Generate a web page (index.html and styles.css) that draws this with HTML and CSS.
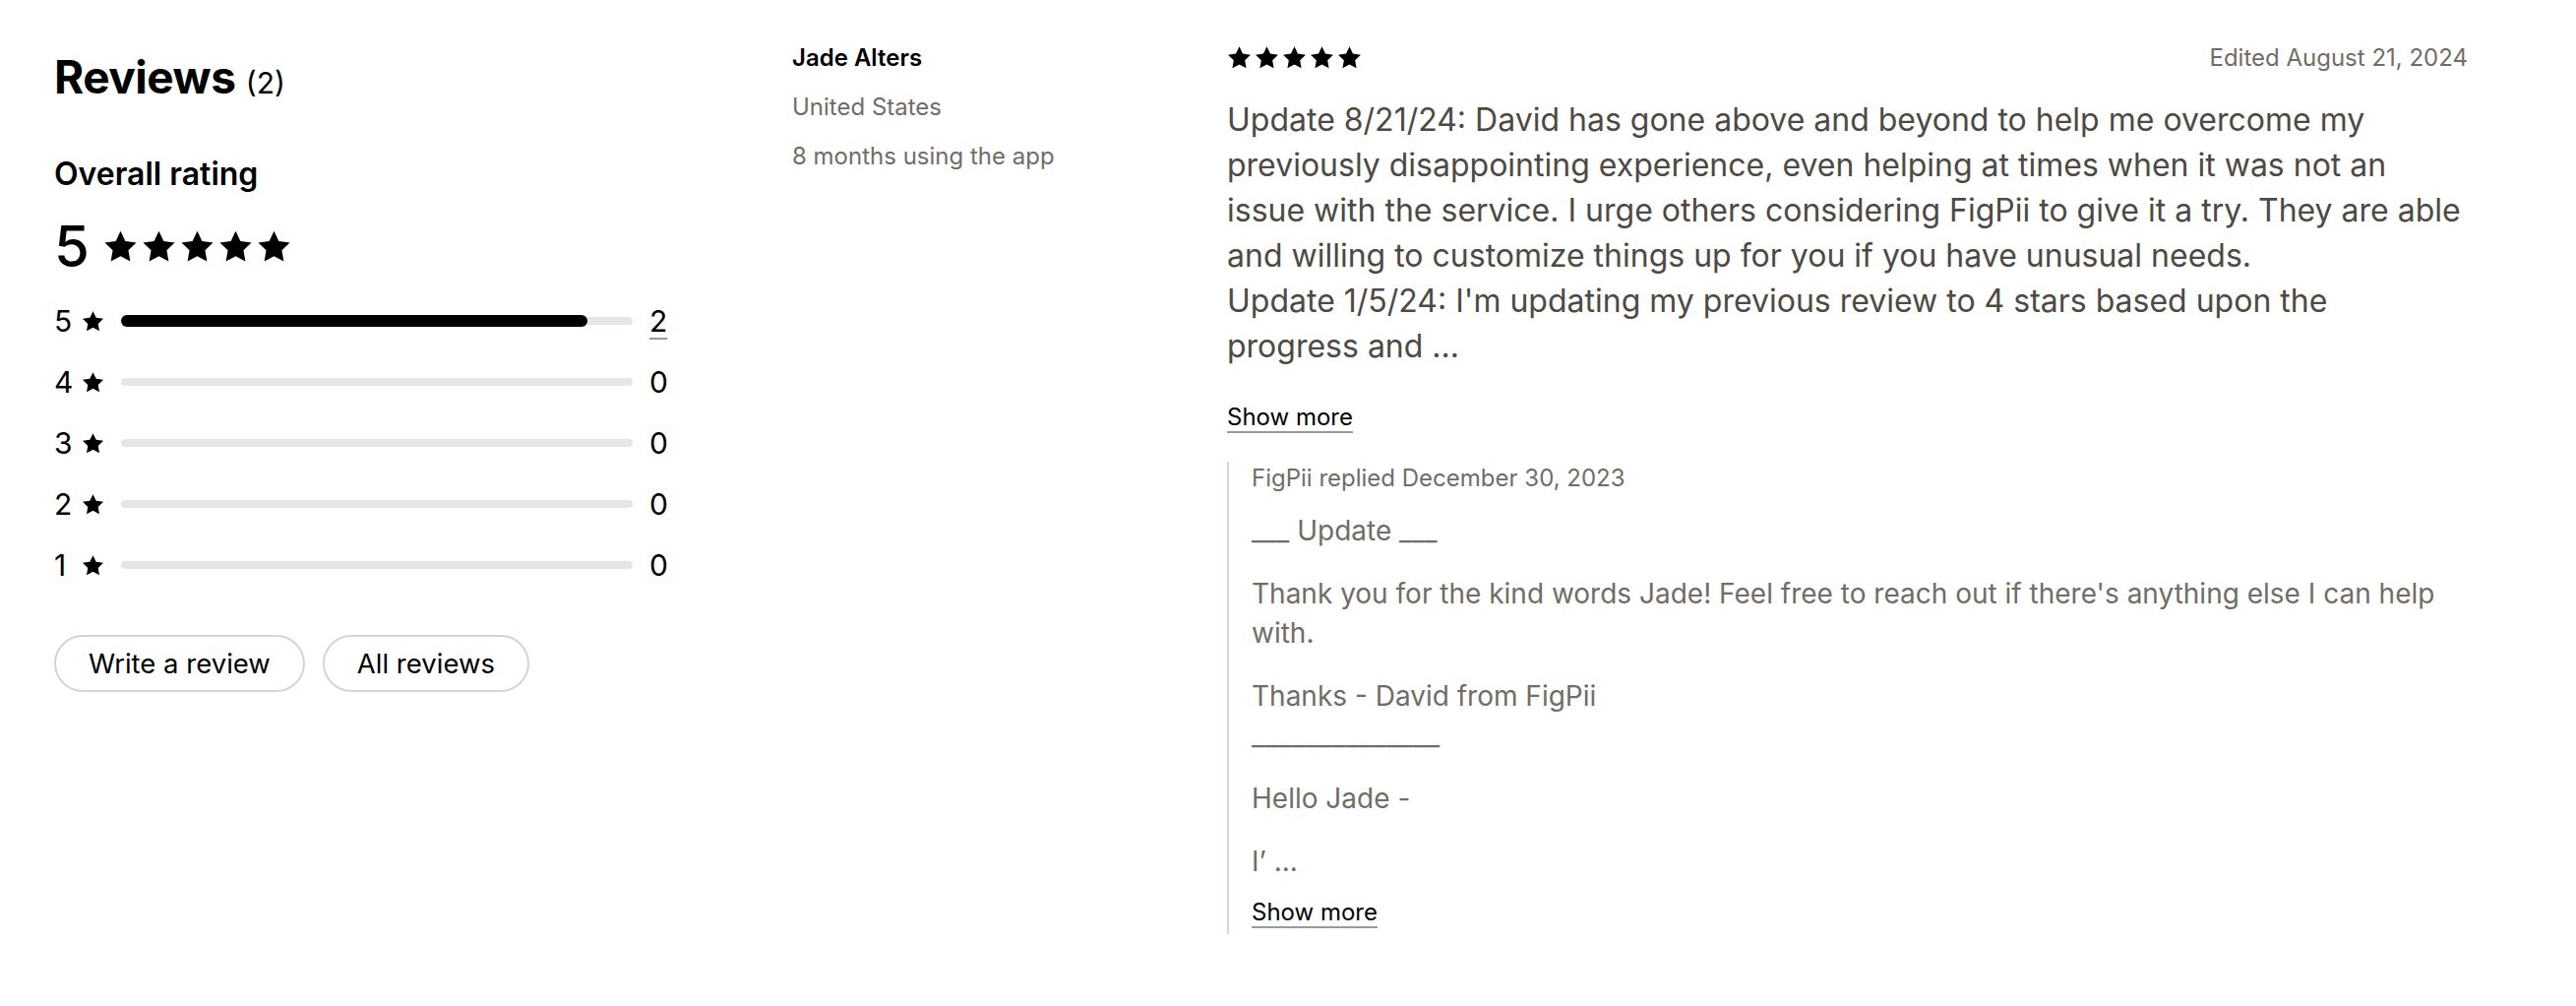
FILE: index.html
```html
<!DOCTYPE html>
<html lang="en">
<head>
<meta charset="utf-8">
<title>Reviews</title>
<link rel="stylesheet" href="styles.css">
</head>
<body>
<svg width="0" height="0" class="defs" aria-hidden="true">
  <defs>
    <symbol id="star" viewBox="0 0 24 24">
      <path d="M12 1.2l3.35 6.95 7.65 1.1-5.55 5.35 1.33 7.6L12 18.6l-6.78 3.6 1.33-7.6L1 9.25l7.65-1.1z"/>
    </symbol>
  </defs>
</svg>
<main class="page">
  <section class="summary">
    <h2 class="title">Reviews <span class="title-count">(2)</span></h2>
    <h3 class="overall">Overall rating</h3>
    <div class="score">
      <span class="score-num">5</span>
      <span class="score-stars">
        <svg class="s-lg"><use href="#star"/></svg>
        <svg class="s-lg"><use href="#star"/></svg>
        <svg class="s-lg"><use href="#star"/></svg>
        <svg class="s-lg"><use href="#star"/></svg>
        <svg class="s-lg"><use href="#star"/></svg>
      </span>
    </div>
    <ul class="dist">
      <li class="dist-row"><span class="dist-num">5</span><svg class="s-md"><use href="#star"/></svg><span class="track"><span class="fill" style="width:91.2%"></span></span><a class="dist-count link" href="#">2</a></li>
      <li class="dist-row"><span class="dist-num">4</span><svg class="s-md"><use href="#star"/></svg><span class="track"></span><span class="dist-count">0</span></li>
      <li class="dist-row"><span class="dist-num">3</span><svg class="s-md"><use href="#star"/></svg><span class="track"></span><span class="dist-count">0</span></li>
      <li class="dist-row"><span class="dist-num">2</span><svg class="s-md"><use href="#star"/></svg><span class="track"></span><span class="dist-count">0</span></li>
      <li class="dist-row"><span class="dist-num">1</span><svg class="s-md"><use href="#star"/></svg><span class="track"></span><span class="dist-count">0</span></li>
    </ul>
    <div class="actions">
      <button class="btn">Write a review</button>
      <button class="btn">All reviews</button>
    </div>
  </section>

  <section class="reviewer">
    <div class="name">Jade Alters</div>
    <div class="meta">United States</div>
    <div class="meta">8 months using the app</div>
  </section>

  <section class="review">
    <div class="review-head">
      <span class="review-stars">
        <svg class="s-sm"><use href="#star"/></svg>
        <svg class="s-sm"><use href="#star"/></svg>
        <svg class="s-sm"><use href="#star"/></svg>
        <svg class="s-sm"><use href="#star"/></svg>
        <svg class="s-sm"><use href="#star"/></svg>
      </span>
      <span class="edited">Edited August 21, 2024</span>
    </div>
    <p class="review-body">Update 8/21/24: David has gone above and beyond to help me overcome my<br>previously disappointing experience, even helping at times when it was not an<br>issue with the service. I urge others considering FigPii to give it a try. They are able<br>and willing to customize things up for you if you have unusual needs.<br>Update 1/5/24: I'm updating my previous review to 4 stars based upon the<br>progress and ...</p>
    <a class="show-more link" href="#">Show more</a>
    <div class="reply">
      <div class="reply-head">FigPii replied December 30, 2023</div>
      <p class="reply-p">___ Update ___</p>
      <p class="reply-p">Thank you for the kind words Jade! Feel free to reach out if there's anything else I can help with.</p>
      <p class="reply-p">Thanks - David from FigPii<br><span class="rule-text">______________</span></p>
      <p class="reply-p">Hello Jade -</p>
      <p class="reply-p">I’ ...</p>
      <a class="show-more reply-more link" href="#">Show more</a>
    </div>
  </section>
</main>
</body>
</html>
```

FILE: styles.css
```css
* { box-sizing: border-box; }

html, body {
  margin: 0;
  padding: 0;
  background: #ffffff;
}

body {
  font-family: Inter, "Noto Sans", "Liberation Sans", sans-serif;
  color: #000000;
}

.defs {
  position: absolute;
  width: 0;
  height: 0;
  overflow: hidden;
}

.page {
  display: grid;
  grid-template-columns: 750px 442px minmax(0, 1fr);
  padding: 33px 110px 40px 55px;
}

/* ---------- summary ---------- */
.title {
  margin: 17px 0 0;
  font-size: 46px;
  line-height: 56px;
  font-weight: 700;
  letter-spacing: -0.5px;
}

.title-count {
  font-size: 30px;
  font-weight: 400;
  letter-spacing: 0;
}

.overall {
  margin: 47px 0 0;
  font-size: 32px;
  line-height: 36px;
  font-weight: 600;
}

.score {
  display: flex;
  align-items: center;
  margin-top: 23px;
  height: 64px;
}

.score-num {
  font-size: 58px;
  line-height: 64px;
  font-weight: 500;
}

.score-stars {
  display: flex;
  gap: 4px;
  margin-left: 14px;
}

.s-lg {
  width: 35px;
  height: 35px;
  fill: #000;
}

.dist {
  list-style: none;
  margin: 13px 0 0;
  padding: 0;
  width: 622px;
}

.dist-row {
  display: flex;
  align-items: center;
  height: 62px;
  font-size: 30px;
}

.dist-num {
  width: 18px;
}

.s-md {
  width: 23px;
  height: 23px;
  margin: 0 17px 0 10px;
  fill: #000;
}

.track {
  flex: 1;
  display: flex;
  align-items: center;
  height: 8px;
  border-radius: 4px;
  background: #e6e6e6;
}

.fill {
  height: 12px;
  border-radius: 6px;
  background: #000;
}

.dist-count {
  margin-left: 17px;
  width: 17px;
  color: #000;
  text-decoration: none;
}

.link {
  color: #000;
  text-decoration: underline;
  text-decoration-color: #9a9a9a;
  text-decoration-thickness: 2px;
  text-underline-offset: 6px;
}

.actions {
  display: flex;
  gap: 18px;
  margin-top: 40px;
}

.btn {
  height: 58px;
  padding: 0 33px;
  border: 2px solid #d4d4d4;
  border-radius: 29px;
  background: #fff;
  font-family: inherit;
  font-size: 27.5px;
  color: #000;
}

/* ---------- reviewer ---------- */
.reviewer {
  padding-top: 1px;
}

.name {
  font-size: 24px;
  line-height: 50px;
  font-weight: 600;
}

.meta {
  font-size: 24px;
  line-height: 50px;
  color: #716c67;
}

/* ---------- review ---------- */
.review-head {
  display: flex;
  justify-content: space-between;
  align-items: center;
  height: 50px;
}

.review-stars {
  display: flex;
  gap: 3px;
}

.s-sm {
  width: 25px;
  height: 25px;
  fill: #000;
}

.edited {
  font-size: 24px;
  color: #716c67;
}

.review-body {
  margin: 16px 0 0;
  font-size: 32px;
  line-height: 46px;
  color: #4d4945;
  white-space: nowrap;
}

.show-more {
  display: inline-block;
  margin-top: 33px;
  font-size: 24px;
  line-height: 32px;
}

.reply {
  margin-top: 29px;
  padding: 0 0 6px 23px;
  border-left: 2px solid #d6d6d6;
}

.reply-head {
  font-size: 24px;
  line-height: 34px;
  color: #716c67;
}

.reply-p {
  margin: 16px 0 0;
  font-size: 28px;
  line-height: 40px;
  color: #716c67;
}

.reply-p + .reply-p {
  margin-top: 24px;
}

.rule-text {
  display: inline-block;
  transform: scaleX(1.07);
  transform-origin: left center;
}

.reply-more {
  margin-top: 16px;
}
```
